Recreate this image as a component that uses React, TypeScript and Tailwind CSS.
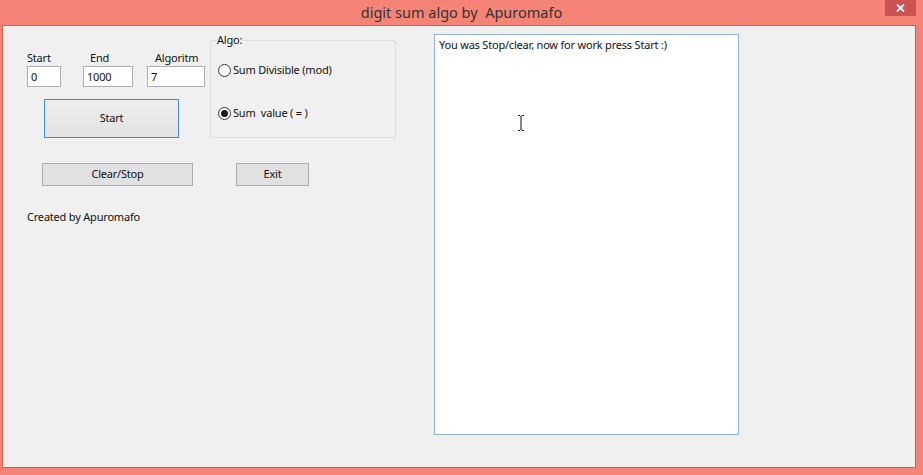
import React from "react";

const F = "font-['Noto_Sans',sans-serif]";
const T = "text-[11px] tracking-[-0.2px] text-[#111]";

function Radio({ checked, label }: { checked?: boolean; label: string }) {
  return (
    <div className="flex items-center h-[14px]">
      <div className="w-[13px] h-[13px] rounded-full border border-[#333] bg-white flex items-center justify-center">
        {checked && <div className="w-[7px] h-[7px] rounded-full bg-[#1a1a1a]" />}
      </div>
      <span className={`ml-[2px] leading-[14px] whitespace-pre ${T}`}>{label}</span>
    </div>
  );
}

export default function App() {
  return (
    <div className={`w-[923px] h-[475px] bg-[#F58376] flex flex-col overflow-hidden ${F}`}>
      {/* Title bar */}
      <div className="relative h-[25px] shrink-0 flex items-center justify-center">
        <span className="text-[14.5px] leading-[20px] text-[#333] whitespace-pre -mt-[2px]">digit sum algo by  Apuromafo</span>
        <div className="absolute top-0 right-[7px] w-[31px] h-[16px] bg-[#CC5253] flex items-center justify-center">
          <svg width="9" height="8" viewBox="0 0 9 8">
            <path d="M1 0.5 L8 7.5 M8 0.5 L1 7.5" stroke="#fff" strokeWidth="1.8" />
          </svg>
        </div>
      </div>
      {/* Client */}
      <div className="ml-[2px] w-[914px] h-[443px] border border-[#C6625A] bg-[#F0F0F0] flex items-start relative">
        {/* Left section */}
        <div className="w-[431px] flex flex-col">
          <div className="flex items-start">
            <div className="ml-[24px] mt-[24px] flex flex-col">
              <div className="flex items-start">
                <div className="w-[34px] flex flex-col">
                  <span className={`h-[16px] leading-[16px] whitespace-nowrap ${T}`}>Start</span>
                  <div className={`w-[34px] h-[21px] border border-[#ABADB3] bg-white px-[3px] leading-[19px] ${T}`}>0</div>
                </div>
                <div className="w-[50px] flex flex-col ml-[22px]">
                  <span className={`h-[16px] pl-[7px] leading-[16px] whitespace-nowrap ${T}`}>End</span>
                  <div className={`w-[50px] h-[21px] border border-[#ABADB3] bg-white px-[3px] leading-[19px] ${T}`}>1000</div>
                </div>
                <div className="w-[58px] flex flex-col ml-[14px]">
                  <span className={`h-[16px] pl-[8px] leading-[16px] whitespace-nowrap ${T}`}>Algoritm</span>
                  <div className={`w-[58px] h-[21px] border border-[#ABADB3] bg-white px-[3px] leading-[19px] ${T}`}>7</div>
                </div>
              </div>
              <div className={`ml-[17px] mt-[12px] w-[135px] h-[39px] border border-[#3C8EDB] bg-gradient-to-b from-[#EDEDED] to-[#E3E3E3] flex items-center justify-center ${T}`}>
                Start
              </div>
            </div>
            <div className="relative ml-[5px] mt-[14px] w-[186px] h-[98px] border border-[#DCDCDC] rounded-[2px]">
              <span className={`absolute -top-[8px] left-[5px] px-[1px] bg-[#F0F0F0] leading-[14px] ${T}`}>Algo:</span>
              <div className="flex flex-col pl-[7px] pt-[22px] gap-[29px]">
                <Radio label="Sum Divisible (mod)" />
                <Radio checked label="Sum  value ( = )" />
              </div>
            </div>
          </div>
          <div className="flex mt-[25px]">
            <div className={`ml-[39px] w-[151px] h-[23px] border border-[#ADADAD] bg-[#E1E1E1] flex items-center justify-center ${T}`}>
              Clear/Stop
            </div>
            <div className={`ml-[43px] w-[73px] h-[23px] border border-[#ADADAD] bg-[#E1E1E1] flex items-center justify-center ${T}`}>
              Exit
            </div>
          </div>
          <span className={`ml-[24px] mt-[23px] leading-[16px] ${T}`}>Created by Apuromafo</span>
        </div>
        {/* Text area */}
        <div className={`relative mt-[8px] w-[305px] h-[401px] border border-[#8FB2D6] bg-white px-[4px] pt-[2px] leading-[16px] ${T}`}>
          <div>You was Stop/clear, now for work press Start :)</div>
          <svg className="absolute left-[82px] top-[80px]" width="8" height="16" viewBox="0 0 8 16">
            <path d="M1 0.5 H3 L4 1.5 L5 0.5 H7 M4 1.5 V14.5 M1 15.5 H3 L4 14.5 L5 15.5 H7" stroke="#111" strokeWidth="1" fill="none" />
          </svg>
        </div>
      </div>
    </div>
  );
}
